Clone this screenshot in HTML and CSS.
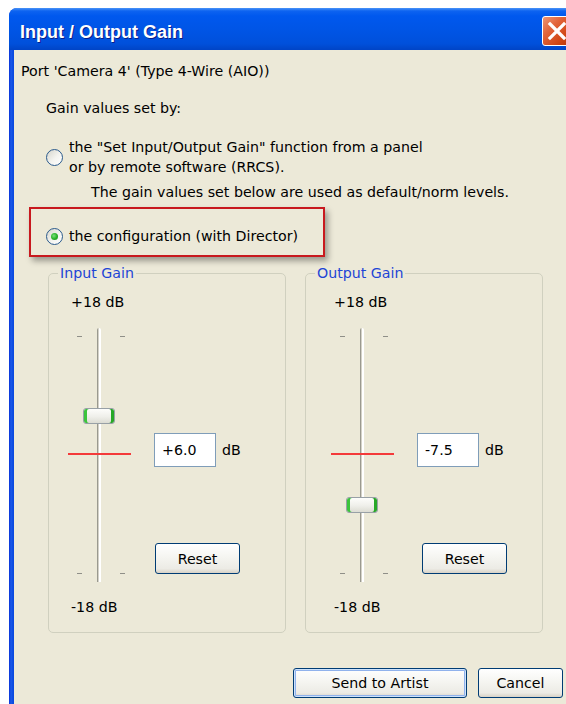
FILE: index.html
```html
<!DOCTYPE html>
<html>
<head>
  <title>Input / Output Gain</title>
  <link rel="stylesheet" href="styles.css">
</head>
<body>
  <div class="dlg">
    <div class="dlg-title">
      <span class="dlg-caption">Input / Output Gain</span>
      <span class="dlg-close">
        <svg width="30" height="30" viewBox="0 0 30 30">
          <path d="M8 8 L22 22 M22 8 L8 22" stroke="#fff" stroke-width="3.2" stroke-linecap="square" fill="none"/>
        </svg>
      </span>
    </div>

    <div class="dlg-client">
      <div class="port-line">Port 'Camera 4' (Type 4-Wire (AIO))</div>
      <div class="set-by">Gain values set by:</div>

      <label class="opt opt-panel">
        <span class="radio"></span>
        <span>the "Set Input/Output Gain" function from a panel<br>or by remote software (RRCS).</span>
      </label>
      <div class="opt-note">The gain values set below are used as default/norm levels.</div>

      <div class="highlight">
        <label class="opt">
          <span class="radio checked"></span>
          <span>the configuration (with Director)</span>
        </label>
      </div>

      <div class="gains">
        <fieldset class="gain gain-in">
          <legend>Input Gain</legend>
          <div class="gain-body">
            <div class="slider-col">
              <div class="db-label">+18 dB</div>
              <div class="slider">
                <span class="tick-row tick-top"></span>
                <span class="tick-row tick-bottom"></span>
                <span class="track"></span>
                <span class="norm"></span>
                <span class="thumb" style="top: 88px"></span>
              </div>
              <div class="db-label">-18 dB</div>
            </div>
            <div class="value-col">
              <div class="value-row">
                <input class="value" type="text" value="+6.0">
                <span>dB</span>
              </div>
              <button class="btn reset">Reset</button>
            </div>
          </div>
        </fieldset>

        <fieldset class="gain gain-out">
          <legend>Output Gain</legend>
          <div class="gain-body">
            <div class="slider-col">
              <div class="db-label">+18 dB</div>
              <div class="slider">
                <span class="tick-row tick-top"></span>
                <span class="tick-row tick-bottom"></span>
                <span class="track"></span>
                <span class="norm"></span>
                <span class="thumb" style="top: 177px"></span>
              </div>
              <div class="db-label">-18 dB</div>
            </div>
            <div class="value-col">
              <div class="value-row">
                <input class="value" type="text" value="-7.5">
                <span>dB</span>
              </div>
              <button class="btn reset">Reset</button>
            </div>
          </div>
        </fieldset>
      </div>

      <div class="actions">
        <button class="btn btn-default btn-send">Send to Artist</button>
        <button class="btn btn-cancel">Cancel</button>
      </div>
    </div>
  </div>
</body>
</html>
```

FILE: styles.css
```css
body {
  margin: 0;
  background: #fff;
  overflow: hidden;
  font-family: "DejaVu Sans", Verdana, sans-serif;
  font-size: 14.2px;
  color: #000;
}

/* window frame */
.dlg {
  width: 567px;
  margin: 8px 0 0 9px;
  border-radius: 8px 8px 0 0;
  background: linear-gradient(to right, #0831d9 0, #1a5ae8 2px, #0a4ae0 4px);
  overflow: hidden;
}

.dlg-title {
  display: flex;
  align-items: center;
  height: 42px;
  padding: 7px 4px 0 11px;
  box-sizing: border-box;
  background: linear-gradient(#4a94f8 0, #0d63f0 3px, #0058ee 8px, #0055e6 50%, #0050db 85%, #0044c6 100%);
}

.dlg-caption {
  flex: 1;
  font-family: "Liberation Sans", Arial, sans-serif;
  font-weight: bold;
  font-size: 18px;
  color: #fff;
  text-shadow: 1px 1px 0 #0a1e8a;
}

.dlg-close {
  display: flex;
  width: 30px;
  height: 30px;
  box-sizing: border-box;
  border: 1px solid #fff;
  border-radius: 3px;
  background: linear-gradient(135deg, #ee9573 0, #e2643a 35%, #cf4412 75%, #b8360a 100%);
  margin-top: -3px;
}

.dlg-close svg {
  margin: -1px;
}

.dlg-client {
  margin-left: 5px;
  height: 654px;
  padding-top: 11px;
  box-sizing: border-box;
  background: #ece9d8;
}

.port-line {
  padding-left: 7px;
  line-height: 20px;
}

.set-by {
  margin: 17px 0 0 32px;
  line-height: 20px;
}

/* radio options */
.opt {
  display: flex;
  align-items: center;
  gap: 6px;
  line-height: 20px;
}

.opt-panel {
  margin: 19px 0 0 32px;
}

.opt-note {
  margin: 5px 0 0 77px;
  line-height: 20px;
}

.radio {
  flex: none;
  display: grid;
  place-items: center;
  width: 17px;
  height: 17px;
  box-sizing: border-box;
  border: 1px solid #2a5a8c;
  border-radius: 50%;
  background: linear-gradient(135deg, #d6d5cc 0, #f4f4f0 55%, #fff 100%);
}

.radio.checked::after {
  content: "";
  width: 7px;
  height: 7px;
  border-radius: 50%;
  background: radial-gradient(circle at 40% 40%, #7ee07e 0, #2cb52c 50%, #178c17 100%);
}

.highlight {
  width: 296px;
  margin: 5px 0 0 15px;
  padding: 17px 0 9px 15px;
  box-sizing: border-box;
  border: 2px solid #c8191e;
  box-shadow: 3px 4px 6px rgba(0, 0, 0, 0.35);
}

/* gain group boxes */
.gains {
  display: flex;
  gap: 19px;
  margin: 7px 0 0 34px;
}

.gain {
  width: 238px;
  min-width: 0;
  box-sizing: border-box;
  margin: 0;
  padding: 11px 0 16px;
  border: 1px solid #d0d0bf;
  border-radius: 5px;
}

.gain legend {
  margin-left: 9px;
  padding: 0 2px;
  line-height: 18px;
  color: #1d45d6;
}

.gain-body {
  display: flex;
}

.slider-col {
  padding-left: 15px;
}

.gain-out .slider-col {
  padding-left: 21px;
}

.db-label {
  padding-left: 7px;
  line-height: 18px;
}

.slider {
  position: relative;
  width: 70px;
  height: 270px;
  margin: 9px 0 8px;
}

.tick-row {
  position: absolute;
  left: 13px;
  width: 48px;
  height: 1px;
  background: linear-gradient(to right, #8f8f88 0 5px, transparent 5px 43px, #8f8f88 43px);
}

.tick-top {
  top: 16px;
}

.tick-bottom {
  top: 253px;
}

.track {
  position: absolute;
  left: 33px;
  top: 8px;
  width: 4px;
  height: 254px;
  border-radius: 2px 2px 0 0;
  background: linear-gradient(to right, #9a998f 0 1px, #d4d2c8 1px 2px, #fff 2px);
}

.norm {
  position: absolute;
  left: 4px;
  top: 133px;
  width: 63px;
  height: 2px;
  background: #f43a3a;
}

.thumb {
  position: absolute;
  left: 19px;
  width: 32px;
  height: 16px;
  box-sizing: border-box;
  border: 1px solid #98a0a6;
  border-radius: 3px;
  background: linear-gradient(#fdfdfb, #efefea 55%, #dcdcd3);
  box-shadow: inset 3px 0 0 #3cc43c, inset -3px 0 0 #27a827;
}

.value-col {
  margin-left: 20px;
  padding-top: 140px;
}

.value-row {
  display: flex;
  align-items: center;
  gap: 6px;
}

.value {
  width: 62px;
  height: 34px;
  box-sizing: border-box;
  margin: 0;
  padding: 0 0 0 7px;
  border: 1px solid #7f9db9;
  font: inherit;
  color: #000;
  background: #fff;
}

/* xp buttons */
.btn {
  height: 30px;
  padding: 0;
  font: inherit;
  color: #000;
  border: 1px solid #003c74;
  border-radius: 3px;
  background: linear-gradient(#fff, #f5f5f1 45%, #ecebe5 85%, #d8d2c6);
}

.reset {
  width: 85px;
  height: 31px;
  margin: 76px 0 0 1px;
}

.gain-out .reset {
  margin-left: 5px;
}

.btn-default {
  box-shadow: inset 0 0 0 1px #cde2fb, inset 0 0 0 2px #90b2ec;
}

.actions {
  display: flex;
  gap: 11px;
  margin: 35px 0 0 279px;
}

.btn-send {
  width: 174px;
}

.btn-cancel {
  width: 85px;
}
```
